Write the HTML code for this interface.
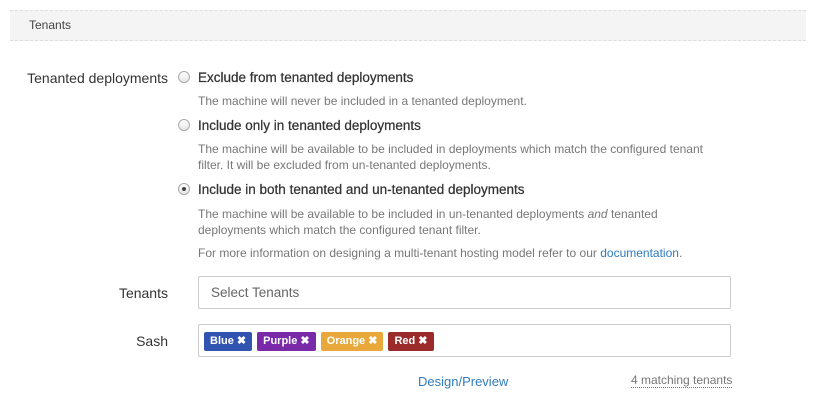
<!DOCTYPE html>
<html><head><style>
body{margin:0;width:815px;height:400px;background:#fff;font-family:"Liberation Sans",sans-serif;color:#333;position:relative;overflow:hidden}
.a{position:absolute;white-space:nowrap}
.hdr{position:absolute;left:10px;top:10px;width:796px;height:29px;background:#f4f4f4;border-top:1px dashed #ddd;border-bottom:1px dashed #ddd}
.lbl{font-size:14px;color:#333;text-align:right;width:168px;left:0}
.opt{font-size:13.5px;left:198px;color:#333;-webkit-text-stroke:0.25px #333}
.d{font-size:12px;left:198px;color:#777}
.r{position:absolute;left:178px;width:10px;height:10px;border:1px solid #aaa;border-radius:50%;background:linear-gradient(#fff,#e6e6e6)}
.r.on::after{content:"";position:absolute;left:3px;top:3px;width:4px;height:4px;border-radius:50%;background:#444}
.box{position:absolute;left:198px;width:531px;height:31px;border:1px solid #ccc;border-radius:2px}
.chip{display:inline-block;color:#fff;font-size:11px;font-weight:bold;padding:0 6px;height:19px;line-height:19px;border-radius:2px;margin-right:5px}
a{color:#2f7bbf;text-decoration:none}
</style></head><body>
<div class="hdr"></div>
<div class="a" style="left:29px;top:18px;font-size:12px;color:#444">Tenants</div>
<div class="a lbl" style="top:70px">Tenanted deployments</div>
<div class="r" style="top:71px"></div>
<div class="a opt" style="top:70px">Exclude from tenanted deployments</div>
<div class="a d" style="top:94px">The machine will never be included in a tenanted deployment.</div>
<div class="r" style="top:119px"></div>
<div class="a opt" style="top:118px">Include only in tenanted deployments</div>
<div class="a d" style="top:142px">The machine will be available to be included in deployments which match the configured tenant</div>
<div class="a d" style="top:158px">filter. It will be excluded from un-tenanted deployments.</div>
<div class="r on" style="top:183px"></div>
<div class="a opt" style="top:182px">Include in both tenanted and un-tenanted deployments</div>
<div class="a d" style="top:207px">The machine will be available to be included in un-tenanted deployments <i>and</i> tenanted</div>
<div class="a d" style="top:223px">deployments which match the configured tenant filter.</div>
<div class="a d" style="top:246px">For more information on designing a multi-tenant hosting model refer to our <a>documentation</a>.</div>
<div class="a lbl" style="top:285px">Tenants</div>
<div class="box" style="top:276px"></div>
<div class="a" style="left:211px;top:285px;font-size:13.5px;color:#666">Select Tenants</div>
<div class="a lbl" style="top:333px">Sash</div>
<div class="box" style="top:324px"></div>
<div class="a" style="left:204px;top:331px">
<span class="chip" style="background:#3154b0">Blue &#x2716;</span><span class="chip" style="background:#7a2aa8">Purple &#x2716;</span><span class="chip" style="background:#e9a83a">Orange &#x2716;</span><span class="chip" style="background:#9b2b2b">Red &#x2716;</span></div>
<div class="a" style="left:418px;top:374px;font-size:13px"><a>Design/Preview</a></div>
<div class="a" style="left:631px;top:374px;font-size:12px;color:#777;border-bottom:1px dotted #777;line-height:13px">4 matching tenants</div>
</body></html>
